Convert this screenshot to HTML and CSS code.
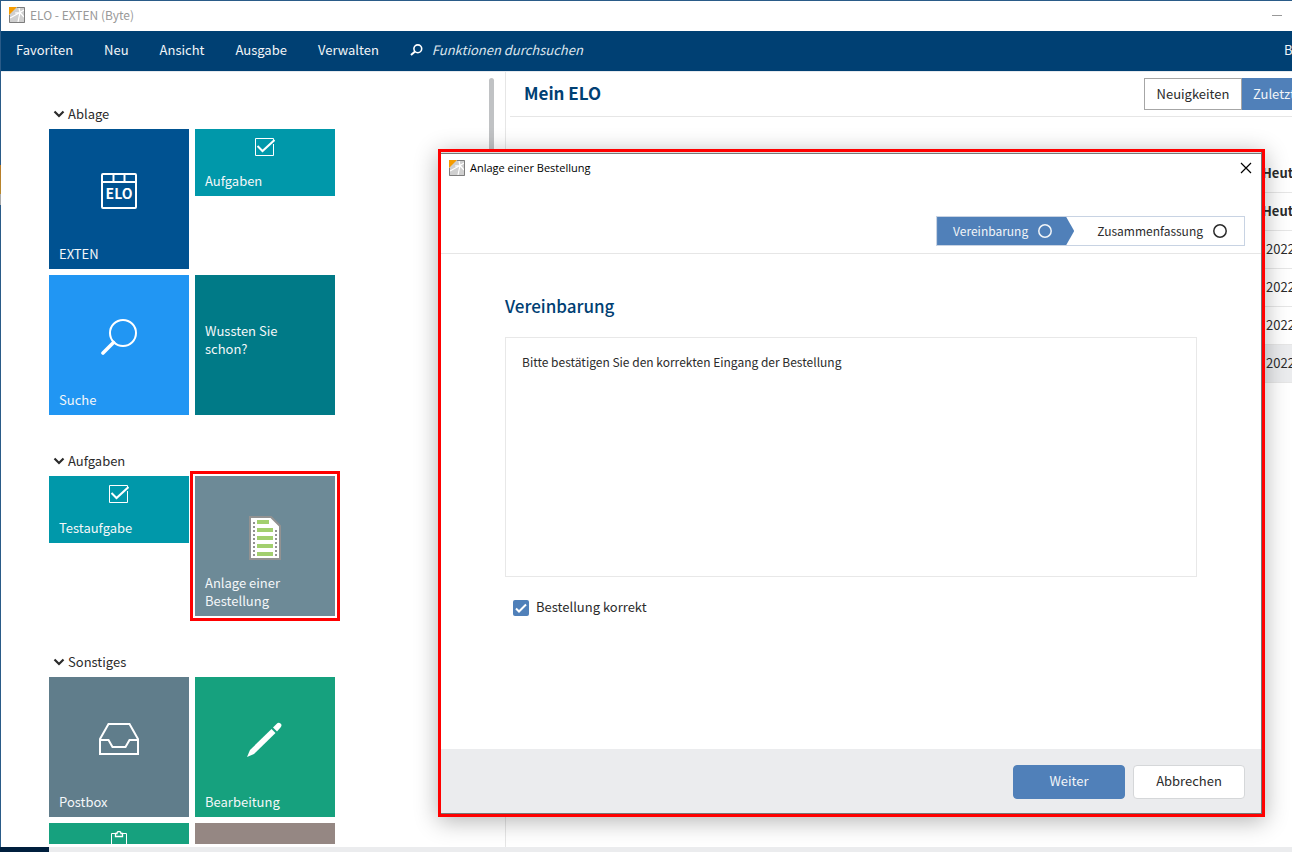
FILE: index.html
```html
<!DOCTYPE html>
<html lang="de">
<head>
<meta charset="utf-8">
<title>ELO - EXTEN (Byte)</title>
<link rel="stylesheet" href="styles.css">
</head>
<body>
<svg class="defs" width="0" height="0" aria-hidden="true">
  <symbol id="logo" viewBox="0 0 16 16">
    <rect width="16" height="16" fill="#cfcfcf"/>
    <path d="M1 11L11 5.500M11 5.500L15 3M11 5.500L9 15M11 5.500L15 10M11 5.500L10 1M11 5.500L6 6" stroke="#fff" stroke-width="1.200" fill="none"/>
    <path d="M0 0H8L0 8Z" fill="#f59c00"/>
    <path d="M8 .5H15.500V15.500H.5V8" fill="none" stroke="#7d7d7d"/>
  </symbol>
  <symbol id="chevron" viewBox="0 0 12 8">
    <path d="M1.500 1.500L6 6L10.500 1.500" fill="none" stroke="#2b2b2b" stroke-width="2.200"/>
  </symbol>
  <symbol id="check" viewBox="0 0 20 20">
    <path d="M18.500 7V18.500H.5V1.500H18.500V3" fill="none" stroke="#fff"/>
    <path d="M2.500 9L7.500 14L19.500 3" fill="none" stroke="#fff" stroke-width="2"/>
  </symbol>
  <symbol id="ring" viewBox="0 0 14 14">
    <circle cx="7" cy="7" r="6.200" fill="none" stroke="currentColor" stroke-width="1.500"/>
  </symbol>
</svg>
<div class="screen">
  <div class="window">
    <header class="titlebar">
      <svg class="logo"><use href="#logo"/></svg>
      <span class="title">ELO - EXTEN (Byte)</span>
      <button class="minimize" aria-label="Minimieren"></button>
    </header>
    <nav class="menu">
      <a href="#">Favoriten</a>
      <a href="#">Neu</a>
      <a href="#">Ansicht</a>
      <a href="#">Ausgabe</a>
      <a href="#">Verwalten</a>
      <label class="search">
        <svg width="13" height="12" viewBox="0 0 13 12" aria-hidden="true"><circle cx="7.800" cy="4.800" r="3.900" fill="none" stroke="#fff" stroke-width="1.600"/><path d="M5 7.500L1 11" stroke="#fff" stroke-width="2"/></svg>
        <input type="text" placeholder="Funktionen durchsuchen" aria-label="Funktionen durchsuchen">
      </label>
      <a class="user" href="#">Byte</a>
    </nav>
    <div class="workspace">
      <aside class="sidebar">
        <div class="groups">
          <section class="group">
            <h2><svg class="chevron"><use href="#chevron"/></svg>Ablage</h2>
            <div class="tiles">
              <button class="tile navy">
                <svg class="icon" width="36" height="36" viewBox="0 0 36 36"><rect x="1" y="1" width="34" height="34" rx="1" fill="none" stroke="#fff" stroke-width="2"/><path d="M1 9H35M12.500 1V9M23.500 1V9" stroke="#fff" stroke-width="2"/><text class="elo" x="18" y="26" text-anchor="middle">ELO</text></svg>
                <span>EXTEN</span>
              </button>
              <button class="tile small teal"><svg class="icon" width="20" height="20"><use href="#check"/></svg><span>Aufgaben</span></button>
              <button class="tile blue">
                <svg class="icon" width="36" height="36" viewBox="0 0 36 36"><circle cx="22" cy="14" r="13" fill="none" stroke="#fff" stroke-width="2"/><path d="M12.500 23.500L2 34" stroke="#fff" stroke-width="3.600" stroke-linecap="round"/></svg>
                <span>Suche</span>
              </button>
              <button class="tile petrol hint"><span>Wussten Sie schon?</span></button>
            </div>
          </section>
          <section class="group">
            <h2><svg class="chevron"><use href="#chevron"/></svg>Aufgaben</h2>
            <div class="tiles">
              <button class="tile small teal"><svg class="icon" width="20" height="20"><use href="#check"/></svg><span>Testaufgabe</span></button>
              <button class="tile slate marked">
                <svg class="icon form" width="32" height="44" viewBox="0 0 32 44"><path d="M1 1H22L31 10V43H1Z" fill="#fff" stroke="#929292" stroke-width="2"/><path d="M5 6V41M27 14V41" stroke="#929292" stroke-width="2" stroke-dasharray="2 2"/><path d="M8 6H20M8 14H24M8 22H24M8 30H24M8 38H24" stroke="#a2cf6e" stroke-width="4"/></svg>
                <span>Anlage einer Bestellung</span>
              </button>
            </div>
          </section>
          <section class="group">
            <h2><svg class="chevron"><use href="#chevron"/></svg>Sonstiges</h2>
            <div class="tiles">
              <button class="tile gray">
                <svg class="icon" width="40" height="34" viewBox="0 0 40 34"><path d="M1 18L9.500 3H30.500L39 18V33H1ZM1 19H9.500L13.500 26H26.500L30.500 19H39" fill="none" stroke="#fff" stroke-width="2"/></svg>
                <span>Postbox</span>
              </button>
              <button class="tile green">
                <svg class="icon" width="36" height="36" viewBox="0 0 36 36"><path d="M0 36L3 29L24.500 8L28.500 12L7 33Z" fill="#fff"/><path d="M26 6.500L29.500 3Q31.500 1 33.500 2.500T33.500 6.500L30 10.500Z" fill="#fff"/></svg>
                <span>Bearbeitung</span>
              </button>
              <button class="tile small green" aria-label="Klemmbrett"><svg class="icon" width="16" height="20" viewBox="0 0 16 20"><path d="M4 2.500H.5V19.500H15.500V2.500H12" fill="none" stroke="#fff"/><path d="M4.500 2.500H6Q6 .5 8 .5T10 2.500H11.500V5.500H4.500Z" fill="none" stroke="#fff" stroke-width="1.300"/></svg></button>
              <button class="tile small taupe" aria-label="Kachel"></button>
            </div>
          </section>
        </div>
        <div class="scrollbar"></div>
      </aside>
      <main class="content">
        <div class="content-head">
          <h1>Mein ELO</h1>
          <div class="tabs">
            <button class="tab">Neuigkeiten</button>
            <button class="tab active">Zuletzt</button>
          </div>
        </div>
        <ul class="feed">
          <li class="strong">Heute</li>
          <li class="strong">Heute</li>
          <li>2022</li>
          <li>2022</li>
          <li>2022</li>
          <li class="selected">2022</li>
        </ul>
      </main>
    </div>
    <footer class="status"></footer>
  </div>

  <section class="dialog" role="dialog" aria-labelledby="dialog-title">
    <header class="dialog-title">
      <svg class="logo"><use href="#logo"/></svg>
      <span id="dialog-title">Anlage einer Bestellung</span>
      <button class="close" aria-label="Schließen"><svg width="12" height="12" viewBox="0 0 12 12"><path d="M1 1L11 11M11 1L1 11" stroke="#000" stroke-width="1.200"/></svg></button>
    </header>
    <div class="steps-bar">
      <ol class="steps">
        <li class="current">Vereinbarung<svg class="ring"><use href="#ring"/></svg></li>
        <li>Zusammenfassung<svg class="ring"><use href="#ring"/></svg></li>
      </ol>
    </div>
    <div class="dialog-body">
      <h2>Vereinbarung</h2>
      <p class="notice">Bitte bestätigen Sie den korrekten Eingang der Bestellung</p>
      <label class="confirm">
        <input type="checkbox" checked>
        <svg width="16" height="16" viewBox="0 0 16 16" aria-hidden="true"><path d="M3 8.500L6 11.500L13 4.500" fill="none" stroke="#fff" stroke-width="2"/></svg>
        <span>Bestellung korrekt</span>
      </label>
    </div>
    <footer class="dialog-foot">
      <button class="btn primary">Weiter</button>
      <button class="btn">Abbrechen</button>
    </footer>
  </section>
</div>
</body>
</html>
```

FILE: styles.css
```css
* { box-sizing: border-box; }
body, h1, h2, p, ul, ol { margin: 0; padding: 0; }
ul, ol { list-style: none; }
body {
  font: 13px/18px "Noto Sans CJK SC", "Noto Sans", sans-serif;
  color: #2b2b2b;
  background: #fff;
}
button { font: inherit; color: inherit; border: 0; padding: 0; margin: 0; background: none; }
.defs { position: absolute; }

.screen { position: relative; height: 100vh; overflow: hidden; }

/* The application window runs past the right edge of the screen. */
.window {
  display: flex;
  flex-direction: column;
  width: calc(100% + 108px);
  height: 100%;
  border-top: 1px solid #2a5b88;
  padding-left: 1px;
  background: linear-gradient(#2a5b88 164px, #b87a28 164px, #b8892d 193px, #aaa 193px, #aaa 204px, #2a5b88 204px) left / 1px 100% no-repeat #fff;
}

.titlebar { display: flex; align-items: center; flex: none; height: 30px; padding: 0 118px 2px 8px; }
.logo { width: 16px; height: 16px; flex: none; }
.title { margin-left: 5px; color: #999; font: 12px/18px "Noto Sans CJK SC", sans-serif; }
.minimize { width: 10px; height: 1px; margin-left: auto; background: #999; }

.menu { display: flex; align-items: center; flex: none; gap: 31px; height: 40px; padding: 0 0 2px 15px; background: #004073; color: #f2f5f8; }
.menu a { color: inherit; text-decoration: none; }
.search { display: flex; align-items: center; gap: 9px; }
.search input { width: 180px; padding: 0; border: 0; background: none; font: italic 13px/18px "Noto Sans CJK SC", sans-serif; color: #fff; }
.search input::placeholder { color: #dde5ed; opacity: 1; }
.menu .user { margin-left: auto; width: 116px; }

.workspace { display: flex; flex: 1; min-height: 0; border-top: 1px solid #e6e9ee; }
.sidebar { display: flex; flex: none; justify-content: space-between; width: 505px; padding: 0 11px 0 48px; border-right: 1px solid #e6e6e6; }
.groups { display: flex; flex-direction: column; gap: 32px; padding-top: 28px; margin-bottom: 3px; overflow: hidden; padding-right: 12px; }
.group h2 { display: flex; align-items: center; gap: 3px; height: 29px; padding: 0 0 2px 4px; font-size: 13px; font-weight: 400; }
.chevron { width: 12px; height: 8px; }
.scrollbar { width: 5px; height: 640px; margin-top: 6px; border-radius: 3px; background: #c0c2c4; }

.tiles { display: grid; grid-template-columns: 140px 140px; gap: 6px; align-items: start; }
.tile { position: relative; display: flex; align-items: flex-end; height: 140px; padding: 6px 10px; color: #f4f7f9; text-align: left; }
.tile .icon { position: absolute; left: 0; right: 0; top: 44px; margin: 0 auto; }
.tile .form { top: 40px; }
.tile.small { height: 67px; }
.tile.small .icon { top: 8px; }
.tile.hint { align-items: center; padding-right: 40px; padding-bottom: 16px; }
.elo { font: 700 14px "Noto Sans CJK SC", sans-serif; fill: #fff; }
.navy { background: #005291; }
.teal { background: #0098aa; }
.blue { background: #2196f3; }
.petrol { background: #007a87; }
.slate { background: #6d8a97; }
.gray { background: #607d8b; }
.green { background: #16a17e; }
.taupe { background: #958783; }
.marked { outline: 3px solid #f00; outline-offset: 2px; }

.content { flex: 1; min-width: 0; padding-left: 4px; }
.content-head { display: flex; align-items: center; justify-content: space-between; height: 45px; padding-left: 14px; border-bottom: 1px solid #e6e6e6; }
.content-head h1 { padding-bottom: 2px; font-size: 17px; line-height: 24px; font-weight: 700; color: #004073; }
.tabs { display: flex; }
.tab { width: 98px; height: 32px; border: 1px solid #a6a6a6; }
.tab.active { width: 158px; border: 0; padding-left: 11px; background: #5080b9; color: #f2f5f8; text-align: left; }
.feed { padding-top: 38px; }
.feed li { display: flex; align-items: center; height: 38px; padding: 0 0 1px calc(100% - 134px); border-bottom: 1px solid #e6e6e6; }
.feed .strong { padding-left: calc(100% - 138px); font-weight: 700; }
.feed .selected { background: #ebecee; }

.status { flex: none; height: 5px; margin-left: -1px; background: linear-gradient(#001f3d, #001f3d) left / 49px 100% no-repeat #ebecee; }

/* Modal wizard over the window */
.dialog {
  position: absolute;
  inset: 149px 27px 35px 438px;
  display: flex;
  flex-direction: column;
  border: 3px solid #f00;
  background: #fff;
  box-shadow: inset -1px -1px #777, inset 0 1px #ddd, inset 0 2px #777, 0 4px 22px rgba(0, 0, 0, .3);
}
.dialog-title { display: flex; align-items: center; height: 34px; padding: 0 10px 2px 8px; color: #000; font: 11px/18px "Open Sans", sans-serif; }
.dialog-title span { margin-left: 5px; }
.close { display: flex; margin-left: auto; }

.steps-bar { display: flex; justify-content: flex-end; height: 68px; padding: 30px 16px 0 0; margin-right: 1px; border-bottom: 1px solid #e6e6e6; }
.steps { display: flex; height: 30px; border: 1px solid #c8d3e3; font-size: 12px; }
.steps li { display: flex; align-items: center; gap: 10px; padding: 0 17px 0 23px; }
.ring { width: 14px; height: 14px; }
.steps .current { padding: 0 22px 0 16px; background: #5080b9; color: #f2f5f8; clip-path: polygon(0 0, calc(100% - 8px) 0, 100% 50%, calc(100% - 8px) 100%, 0 100%); }

.dialog-body { flex: 1; padding: 40px 65px 0 64px; }
.dialog-body h2 { font-size: 17px; line-height: 24px; font-weight: 500; color: #004073; }
.notice { height: 240px; margin-top: 19px; padding: 15px 16px; border: 1px solid #e8e8e8; font-size: 12px; }
.confirm { position: relative; display: flex; align-items: center; gap: 7px; margin-top: 21px; padding-left: 8px; }
.confirm span { padding-bottom: 2px; }
.confirm input { appearance: none; width: 16px; height: 16px; margin: 0; border-radius: 2px; background: #5080b9; }
.confirm svg { position: absolute; left: 8px; top: 2px; }

.dialog-foot { display: flex; justify-content: flex-end; gap: 8px; height: 64px; margin: 0 1px 1px 0; padding: 16px 16px 0; background: #ebecee; }
.btn { width: 112px; height: 34px; padding-bottom: 2px; border: 1px solid #d5d7d9; border-radius: 4px; background: #fff; }
.btn.primary { border-color: #5080b9; background: #5080b9; color: #f2f5f8; }
```
